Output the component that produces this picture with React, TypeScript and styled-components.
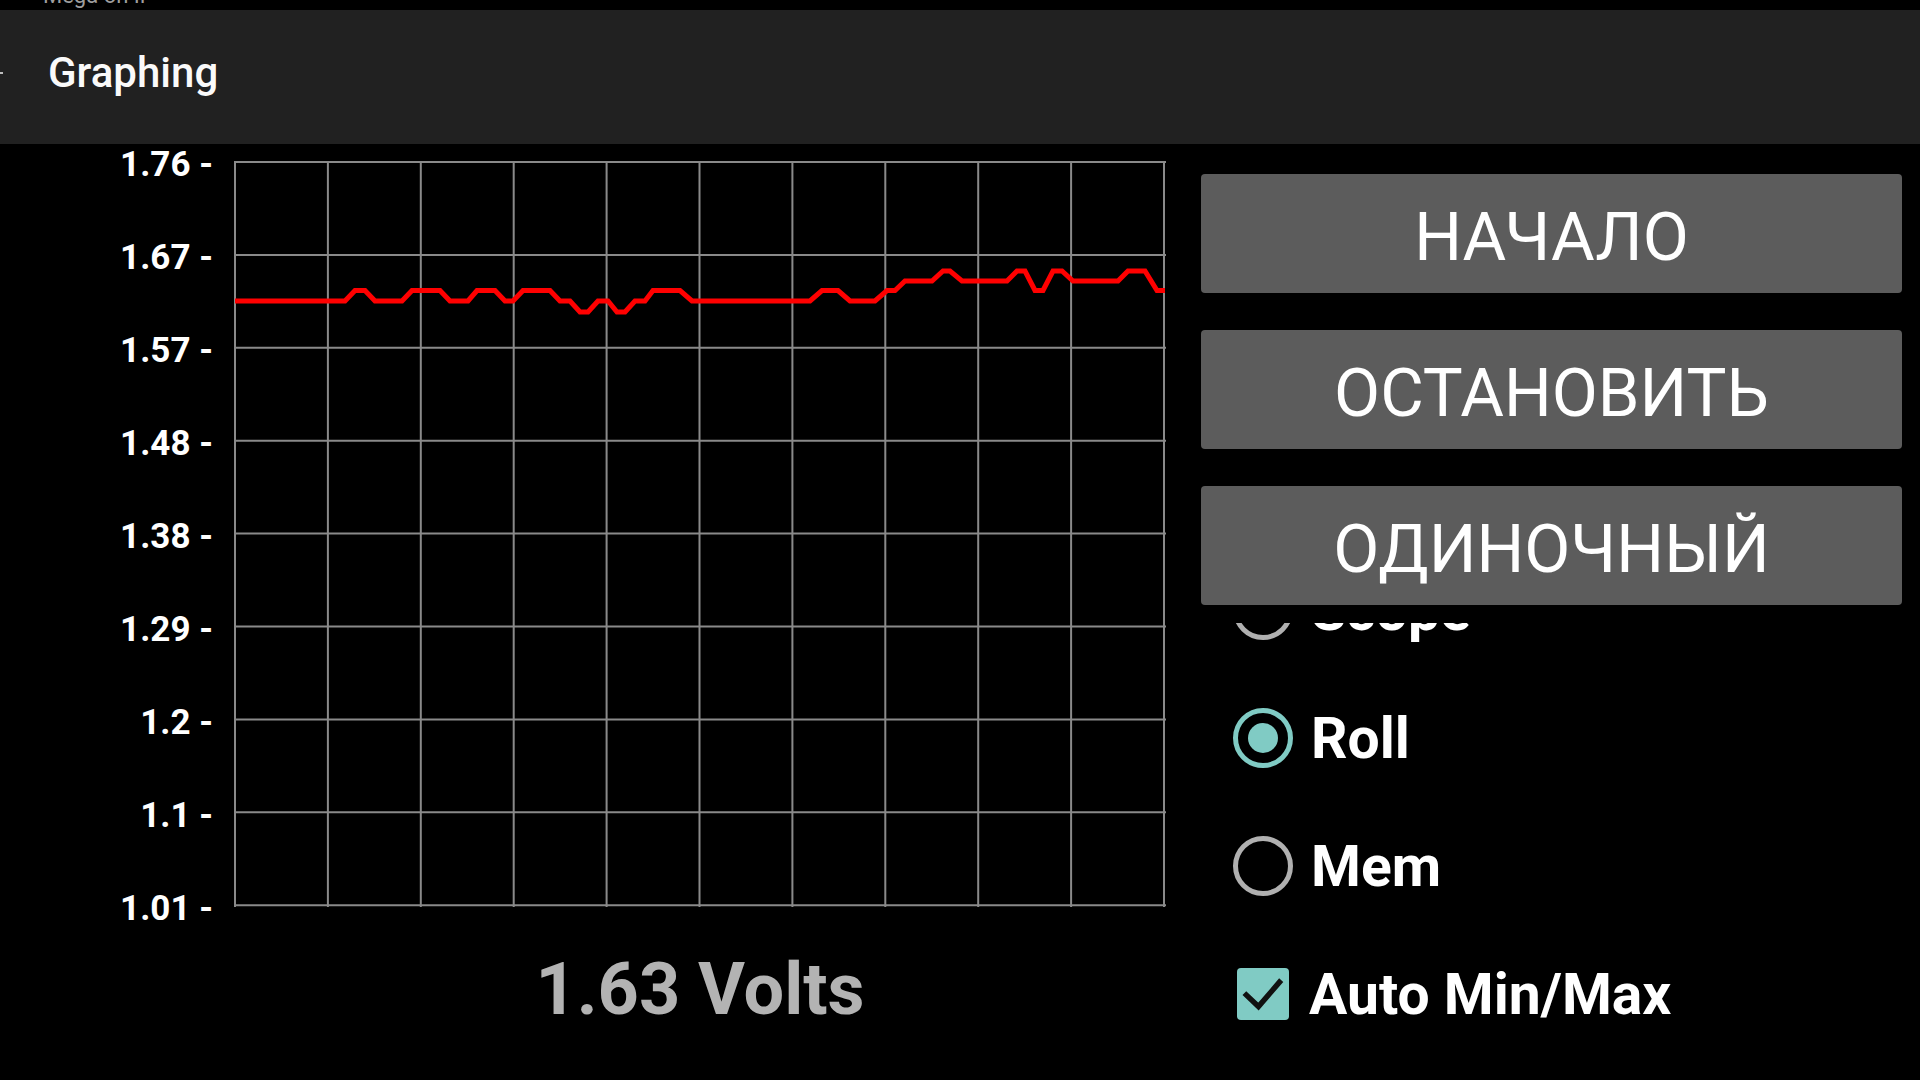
import React from "react";
import styled, { createGlobalStyle } from "styled-components";

const GlobalStyle = createGlobalStyle`
  html, body {
    margin: 0;
    padding: 0;
    background: #000;
    overflow: hidden;
  }
  body {
    font-family: Roboto, "Noto Sans", "Liberation Sans", sans-serif;
  }
`;

const axisLabels = ["1.76", "1.67", "1.57", "1.48", "1.38", "1.29", "1.2", "1.1", "1.01"];

const PLOT_W = 932;
const PLOT_H = 747;
const CELL = 92.9;
const PLOT_X0 = 234;

// levels in plot-local y
const BASE = 140;
const UP1 = 129.5;
const DOWN1 = 151;
const UP2 = 120;
const UP3 = 110;

// [page x, level] pairs traced from the sample run
const samples: [number, number][] = [
  [235, BASE], [345, BASE], [355, UP1], [365, UP1], [375, BASE],
  [402, BASE], [412, UP1], [440, UP1], [450, BASE], [468, BASE],
  [477, UP1], [495, UP1], [505, BASE], [513, BASE], [523, UP1],
  [550, UP1], [560, BASE], [570, BASE], [580, DOWN1], [588, DOWN1],
  [598, BASE], [608, BASE], [617, DOWN1], [625, DOWN1], [635, BASE],
  [645, BASE], [653, UP1], [680, UP1], [692, BASE], [810, BASE],
  [822, UP1], [838, UP1], [850, BASE], [875, BASE], [887, UP1],
  [895, UP1], [905, UP2], [932, UP2], [943, UP3], [950, UP3],
  [962, UP2], [1007, UP2], [1017, UP3], [1025, UP3], [1035, UP1],
  [1043, UP1], [1053, UP3], [1062, UP3], [1073, UP2], [1118, UP2],
  [1128, UP3], [1145, UP3], [1157, UP1], [1165, UP1],
];

const Page = styled.div`
  width: 1920px;
  height: 1080px;
  background: #000;
  overflow: hidden;
  display: flex;
  flex-direction: column;
`;

const StatusBar = styled.div`
  height: 10px;
  overflow: hidden;
  padding-left: 43px;
  color: #9e9e9e;
  font-size: 22px;
  line-height: 22px;
`;

const StatusText = styled.div`
  margin-top: -15px;
`;

const AppBar = styled.header`
  height: 134px;
  background: #212121;
  display: flex;
  align-items: center;
  padding-bottom: 9px;
  box-sizing: border-box;
`;

const BackStub = styled.span`
  width: 3px;
  height: 2px;
  background: #bdbdbd;
`;

const Title = styled.h1`
  margin: 0 0 0 45px;
  font-size: 42px;
  line-height: 42px;
  font-weight: 500;
  color: #fafafa;
`;

const Main = styled.main`
  flex: 1;
  min-height: 0;
  display: flex;
`;

const ChartSection = styled.section`
  width: 1201px;
  display: flex;
  flex-direction: column;
`;

const ChartRow = styled.div`
  display: flex;
  align-items: flex-start;
`;

const Axis = styled.div`
  width: ${PLOT_X0}px;
  height: 784px;
  padding-right: 21px;
  box-sizing: border-box;
  display: flex;
  flex-direction: column;
  justify-content: space-between;
  align-items: flex-end;
`;

const AxisLabel = styled.span`
  height: 40px;
  line-height: 42px;
  font-size: 35px;
  font-weight: 700;
  color: #fff;
  white-space: pre;
`;

const Plot = styled.svg`
  display: block;
  margin-top: 17px;
`;

const Readout = styled.div`
  margin: 17px 0 0 ${PLOT_X0}px;
  width: ${PLOT_W}px;
  text-align: center;
  font-size: 72px;
  line-height: 90px;
  font-weight: 700;
  color: #b3b3b3;
`;

const ControlPanel = styled.aside`
  width: 701px;
  padding-top: 30px;
  display: flex;
  flex-direction: column;
`;

const ButtonStack = styled.div`
  display: flex;
  flex-direction: column;
  gap: 37px;
`;

const ActionButton = styled.button`
  height: 119px;
  border: none;
  border-radius: 4px;
  background: #5c5c5c;
  color: #fff;
  font-family: Roboto, sans-serif;
  font-size: 67px;
  font-weight: 400;
  padding: 6px 0 0;
  cursor: pointer;
`;

/* scroll area of the mode options; it is scrolled so the first row is half out of view */
const OptionViewport = styled.div`
  margin-top: 18px;
  flex: 1;
  min-height: 0;
  overflow: hidden;
`;

const OptionList = styled.div`
  margin-top: -77px;
  display: flex;
  flex-direction: column;
`;

const OptionRow = styled.label`
  height: 128px;
  display: flex;
  align-items: center;
  padding-left: 32px;
  gap: 18px;
  color: #fff;
  font-size: 57px;
  font-weight: 700;
`;

const RadioMark = styled.span<{ $checked?: boolean }>`
  width: 60px;
  height: 60px;
  box-sizing: border-box;
  border-radius: 50%;
  border: 5px solid ${(p) => (p.$checked ? "#80cbc4" : "#b0b0b0")};
  display: flex;
  align-items: center;
  justify-content: center;

  &::after {
    content: "";
    display: ${(p) => (p.$checked ? "block" : "none")};
    width: 30px;
    height: 30px;
    border-radius: 50%;
    background: #80cbc4;
  }
`;

const CheckMark = styled.span`
  width: 52px;
  height: 52px;
  margin: 0 2px 0 4px;
  border-radius: 4px;
  background: #80cbc4;
  display: flex;
  align-items: center;
  justify-content: center;
`;

const Graph: React.FC = () => {
  const gridX = Array.from({ length: 11 }, (_, i) => 1 + i * CELL);
  const gridY = Array.from({ length: 9 }, (_, i) => 1 + i * CELL);
  const points = samples.map(([x, y]) => `${x - PLOT_X0},${y}`).join(" ");

  return (
    <Plot width={PLOT_W} height={PLOT_H} viewBox={`0 0 ${PLOT_W} ${PLOT_H}`}>
      {gridX.map((x) => (
        <line key={`x${x}`} x1={x} y1={0} x2={x} y2={PLOT_H - 1} stroke="#8a8a8a" strokeWidth={2} />
      ))}
      {gridY.map((y) => (
        <line key={`y${y}`} x1={0} y1={y} x2={PLOT_W} y2={y} stroke="#8a8a8a" strokeWidth={2} />
      ))}
      <polyline points={points} fill="none" stroke="#ff0000" strokeWidth={5} strokeLinejoin="miter" />
    </Plot>
  );
};

const App: React.FC = () => {
  return (
    <Page>
      <GlobalStyle />
      <StatusBar>
        <StatusText>Mega on IP</StatusText>
      </StatusBar>
      <AppBar>
        <BackStub />
        <Title>Graphing</Title>
      </AppBar>
      <Main>
        <ChartSection>
          <ChartRow>
            <Axis>
              {axisLabels.map((l) => (
                <AxisLabel key={l}>{`${l} -`}</AxisLabel>
              ))}
            </Axis>
            <Graph />
          </ChartRow>
          <Readout>1.63 Volts</Readout>
        </ChartSection>
        <ControlPanel>
          <ButtonStack>
            <ActionButton>НАЧАЛО</ActionButton>
            <ActionButton>ОСТАНОВИТЬ</ActionButton>
            <ActionButton>ОДИНОЧНЫЙ</ActionButton>
          </ButtonStack>
          <OptionViewport>
            <OptionList>
              <OptionRow>
                <RadioMark />
                Scope
              </OptionRow>
              <OptionRow>
                <RadioMark $checked />
                Roll
              </OptionRow>
              <OptionRow>
                <RadioMark />
                Mem
              </OptionRow>
              <OptionRow>
                <CheckMark>
                  <svg width="52" height="52" viewBox="0 0 24 24">
                    <polyline points="3.4,11.6 9.9,17.8 20.4,5.6" fill="none" stroke="#111" strokeWidth={2.5} />
                  </svg>
                </CheckMark>
                Auto Min/Max
              </OptionRow>
            </OptionList>
          </OptionViewport>
        </ControlPanel>
      </Main>
    </Page>
  );
};

export default App;
